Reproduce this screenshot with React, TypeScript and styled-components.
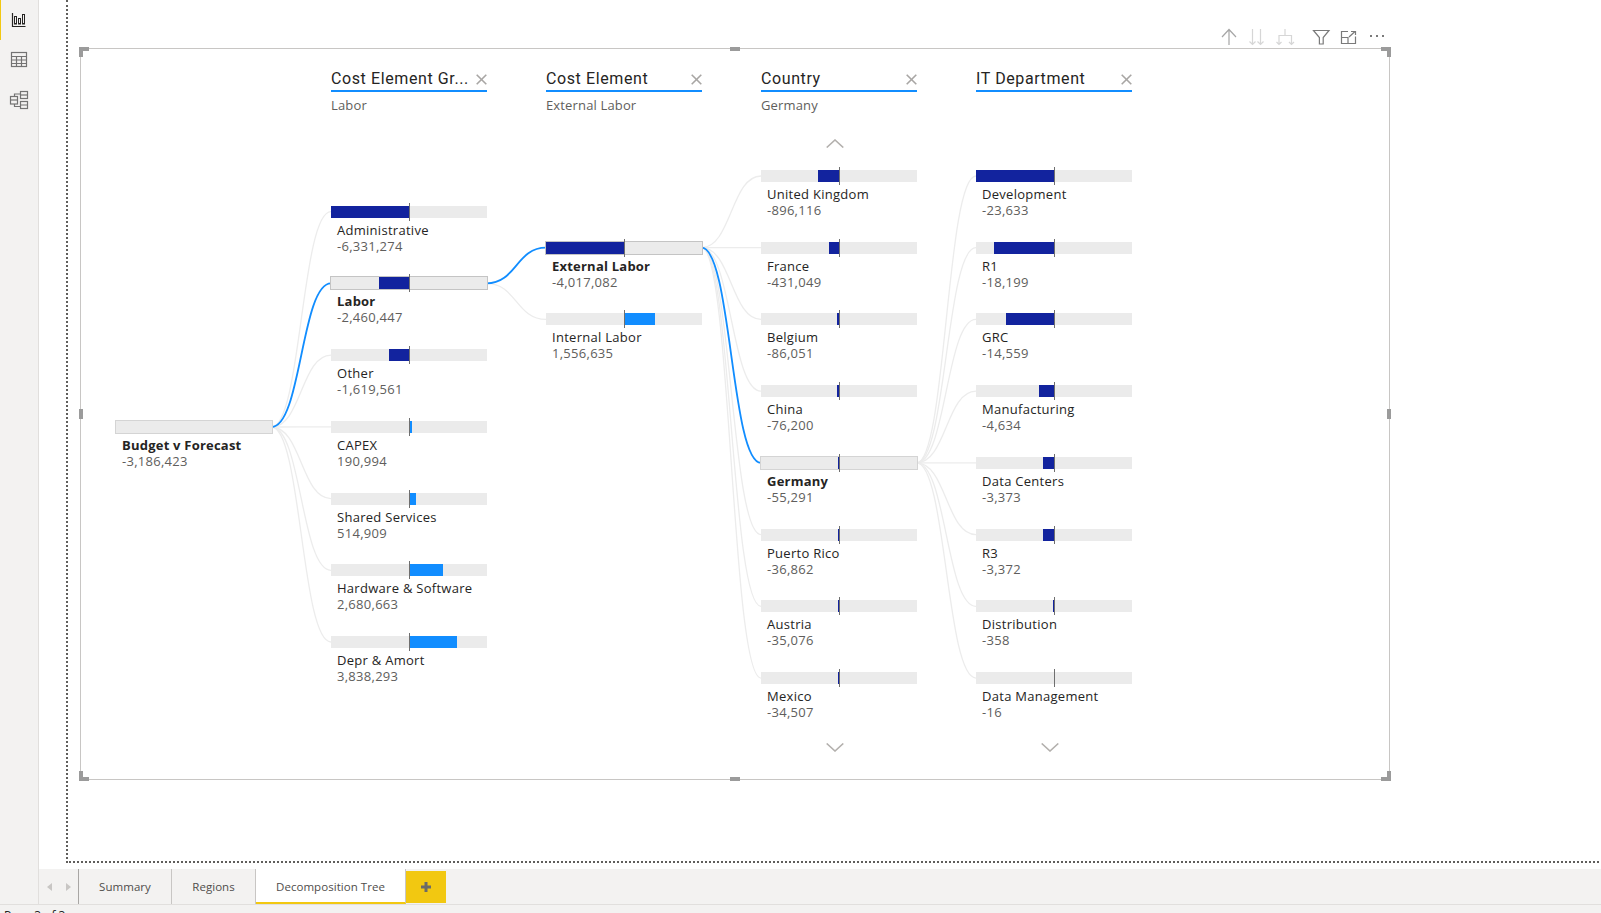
import React from "react";
import styled, { createGlobalStyle } from "styled-components";

const SANS = `"Open Sans", "Noto Sans", "Liberation Sans", sans-serif`;
const NAVY = "#12239e";
const BLUE = "#118dff";
const ROW = 71.72;
const BAR = 12;
const COL_W = 155.5;

const GlobalStyle = createGlobalStyle`
  html, body { margin: 0; padding: 0; background: #fff; overflow: hidden; }
  * { box-sizing: border-box; }
`;

const Page = styled.div`
  width: 1601px; height: 913px; display: flex; flex-direction: column;
  overflow: hidden; font-family: ${SANS}; background: #f3f2f1;
`;
const Top = styled.div`display: flex; height: 904px;`;
const Rail = styled.nav`
  width: 39px; flex: none; background: #f3f2f1; border-right: 1px solid #e1dfdd;
  display: flex; flex-direction: column;
`;
const RailItem = styled.div<{ $active?: boolean }>`
  height: 40px; display: flex; align-items: center; justify-content: center;
  padding-right: 1px;
  border-left: 1px solid ${(p) => (p.$active ? "#f2c811" : "transparent")};
  svg { display: block; margin-left: -1px; }
`;
const Main = styled.div`flex: 1; min-width: 0; display: flex; flex-direction: column;`;
const Canvas = styled.div`height: 869px; background: #fff; padding-left: 27px; overflow: hidden;`;
const ReportPage = styled.div`
  height: 863px; width: 1540px; padding: 48px 0 0 12px;
  border-left: 2px dotted #605e5c; border-bottom: 2px dotted #605e5c;
`;
const Visual = styled.section`
  position: relative; width: 1310px; height: 732px; border: 1px solid #c8c6c4;
`;
const Handle = styled.i<{ $x: "l" | "c" | "r"; $y: "t" | "m" | "b" }>`
  position: absolute; background: #9b9b9b;
  ${(p) => (p.$x === "l" ? "left: -2px;" : p.$x === "r" ? "right: -2px;" : "left: 649px;")}
  ${(p) => (p.$y === "t" ? "top: -2px;" : p.$y === "b" ? "bottom: -2px;" : "top: 360px;")}
  width: ${(p) => (p.$x === "c" ? "10px" : p.$y === "m" ? "4px" : "10px")};
  height: ${(p) => (p.$x === "c" ? "4px" : p.$y === "m" ? "10px" : "10px")};
  ${(p) => p.$x !== "c" && p.$y !== "m" && `
    clip-path: polygon(${
      p.$x === "l" && p.$y === "t" ? "0 0,100% 0,100% 40%,40% 40%,40% 100%,0 100%"
      : p.$x === "r" && p.$y === "t" ? "0 0,100% 0,100% 100%,60% 100%,60% 40%,0 40%"
      : p.$x === "l" ? "0 0,40% 0,40% 60%,100% 60%,100% 100%,0 100%"
      : "60% 0,100% 0,100% 100%,0 100%,0 60%,60% 60%"
    });
  `}
`;
const VisualToolbar = styled.div`
  position: absolute; top: -27px; right: -2px; height: 30px; display: flex;
`;
const ToolIcon = styled.svg<{ $gap?: boolean }>`
  display: block; width: 28px; height: 30px; margin-left: ${(p) => (p.$gap ? "8px" : "0")};
`;
const Links = styled.svg`position: absolute; left: 0; top: 0; width: 100%; height: 100%; pointer-events: none;`;
const Tree = styled.div`
  position: relative; display: flex; gap: 59.5px; padding-left: 35px; height: 100%;
`;
const Column = styled.div`width: ${COL_W}px; flex: none; display: flex; flex-direction: column;`;
const Head = styled.header`height: 72px; padding-top: 20px;`;
const TitleRow = styled.div`
  height: 23px; display: flex; align-items: center; justify-content: space-between;
  border-bottom: 2px solid ${BLUE}; padding-bottom: 2px;
`;
const Title = styled.h2`
  margin: 0; font: 400 16px/21px Roboto, "Liberation Sans", sans-serif; letter-spacing: 0.6px;
  color: #252423; white-space: nowrap;
`;
const CloseIcon = styled.svg`display: block; width: 11px; height: 11px; flex: none; margin-top: 2px;`;
const Selection = styled.div`
  margin-top: 4px; font-size: 13px; line-height: 18px; letter-spacing: 0.15px; color: #605e5c; white-space: nowrap;
`;
const Slot = styled.div<{ $h: number }>`
  height: ${(p) => p.$h}px; flex: none; display: flex; align-items: flex-start;
  justify-content: center; padding-right: 8px;
`;
const Chevron = styled.svg<{ $top: number }>`
  display: block; width: 18px; height: 9px; margin-top: ${(p) => p.$top}px;
`;
const Node = styled.div`height: ${ROW}px; flex: none;`;
const Bar = styled.div<{ $sel?: "strong" | "soft" }>`
  position: relative; height: ${BAR}px; background: #ebebeb;
  ${(p) => p.$sel === "strong" && "box-shadow: 0 0 0 1px #c4c4c4;"}
  ${(p) => p.$sel === "soft" && "box-shadow: 0 0 0 1px #d4d4d4;"}
`;
const Fill = styled.div<{ $positive: boolean }>`
  position: absolute; top: 0; bottom: 0; background: ${(p) => (p.$positive ? BLUE : NAVY)};
`;
const Zero = styled.div`
  position: absolute; left: 78px; top: -3px; bottom: -3px; width: 1px; background: #6f6f6f;
`;
const Name = styled.div<{ $bold?: boolean }>`
  margin-top: 4px; padding-left: 6px; font-size: 13px; line-height: 16px;
  letter-spacing: ${(p) => (p.$bold ? "0.22px" : "0.28px")};
  font-weight: ${(p) => (p.$bold ? 700 : 400)}; color: #252423; white-space: nowrap;
`;
const Amount = styled.div`
  padding-left: 6px; font-size: 13px; line-height: 16.5px; letter-spacing: 0.28px; color: #605e5c; white-space: nowrap;
`;
const TabBar = styled.div`height: 35px; display: flex; background: #f3f2f1;`;
const TabNav = styled.div`
  width: 40px; border-right: 1px solid #a8a6a4; display: flex; align-items: center;
  justify-content: center; gap: 14px; padding-left: 1px;
`;
const Arrow = styled.i<{ $dir: "l" | "r" }>`
  width: 0; height: 0; border-top: 4px solid transparent; border-bottom: 4px solid transparent;
  ${(p) => (p.$dir === "l" ? "border-right: 5px solid #c8c6c4;" : "border-left: 5px solid #c8c6c4;")}
`;
const Tab = styled.div<{ $active?: boolean; $w: number }>`
  width: ${(p) => p.$w}px; display: flex; align-items: center; justify-content: center;
  font-size: 11.5px; letter-spacing: 0.05px; color: #4f4d4b; padding-bottom: 1px;
  border-right: 1px solid #c8c6c4;
  ${(p) => p.$active && `background: #fff; border-bottom: 2px solid #f2c811; padding: 1px 0 0;`}
`;
const AddTab = styled.div`
  width: 40px; height: 32px; margin-top: 2px; background: #f2c811; display: flex;
  align-items: center; justify-content: center;
`;
const Plus = styled.svg`display: block; width: 12px; height: 12px;`;
const Status = styled.footer`
  height: 9px; border-top: 1px solid #e1dfdd; padding: 3px 0 0 4px; overflow: hidden;
  font-size: 12px; line-height: 16px; color: #252423;
`;

type Item = { name: string; value: string; amt: number; sel?: "strong" | "soft" };

const root: Item[] = [{ name: "Budget v Forecast", value: "-3,186,423", amt: 0, sel: "soft" }];
const group: Item[] = [
  { name: "Administrative", value: "-6,331,274", amt: -78 },
  { name: "Labor", value: "-2,460,447", amt: -30, sel: "strong" },
  { name: "Other", value: "-1,619,561", amt: -20 },
  { name: "CAPEX", value: "190,994", amt: 2 },
  { name: "Shared Services", value: "514,909", amt: 6 },
  { name: "Hardware & Software", value: "2,680,663", amt: 33 },
  { name: "Depr & Amort", value: "3,838,293", amt: 47 },
];
const element: Item[] = [
  { name: "External Labor", value: "-4,017,082", amt: -78, sel: "strong" },
  { name: "Internal Labor", value: "1,556,635", amt: 30 },
];
const country: Item[] = [
  { name: "United Kingdom", value: "-896,116", amt: -21.5 },
  { name: "France", value: "-431,049", amt: -10.5 },
  { name: "Belgium", value: "-86,051", amt: -2.5 },
  { name: "China", value: "-76,200", amt: -2 },
  { name: "Germany", value: "-55,291", amt: -1.5, sel: "soft" },
  { name: "Puerto Rico", value: "-36,862", amt: -1.2 },
  { name: "Austria", value: "-35,076", amt: -1.2 },
  { name: "Mexico", value: "-34,507", amt: -1.2 },
];
const dept: Item[] = [
  { name: "Development", value: "-23,633", amt: -78 },
  { name: "R1", value: "-18,199", amt: -60 },
  { name: "GRC", value: "-14,559", amt: -48 },
  { name: "Manufacturing", value: "-4,634", amt: -15 },
  { name: "Data Centers", value: "-3,373", amt: -11.5 },
  { name: "R3", value: "-3,372", amt: -11.5 },
  { name: "Distribution", value: "-358", amt: -1.2 },
  { name: "Data Management", value: "-16", amt: 0 },
];

// Tops of the first bar in each column, measured from the head's lower edge.
const LIST_TOP = [300, 84.7, 120.7, 49, 49];
const HEAD = 72;
const colLeft = (c: number) => 35 + c * (COL_W + 59.5);
const rowY = (c: number, r: number) => HEAD + LIST_TOP[c] + r * ROW + BAR / 2;

function link(c: number, from: number, to: number) {
  const x1 = colLeft(c) + COL_W;
  const x2 = colLeft(c + 1);
  const mid = (x1 + x2) / 2;
  const y1 = rowY(c, from);
  const y2 = rowY(c + 1, to);
  return `M${x1} ${y1} C${mid} ${y1} ${mid} ${y2} ${x2} ${y2}`;
}

const edges: { c: number; from: number; count: number; active: number }[] = [
  { c: 0, from: 0, count: group.length, active: 1 },
  { c: 1, from: 1, count: element.length, active: 0 },
  { c: 2, from: 0, count: country.length, active: 4 },
  { c: 3, from: 4, count: dept.length, active: -1 },
];

function TreeNode({ item }: { item: Item }) {
  const w = Math.abs(item.amt);
  const pos = item.amt > 0;
  return (
    <Node>
      <Bar $sel={item.sel}>
        {w > 0 && <Fill $positive={pos} style={pos ? { left: 79, width: w } : { left: 78 - w, width: w }} />}
        {item.name !== "Budget v Forecast" && <Zero />}
      </Bar>
      <Name $bold={!!item.sel}>{item.name}</Name>
      <Amount>{item.value}</Amount>
    </Node>
  );
}

function Header({ title, selection }: { title: string; selection?: string }) {
  return (
    <Head>
      <TitleRow>
        <Title>{title}</Title>
        <CloseIcon viewBox="0 0 11 11">
          <path d="M0.7 0.7L10.3 10.3M10.3 0.7L0.7 10.3" stroke="#a8a6a4" strokeWidth="1.6" fill="none" />
        </CloseIcon>
      </TitleRow>
      {selection && <Selection>{selection}</Selection>}
    </Head>
  );
}

const ChevronUp = () => (
  <Chevron $top={18} viewBox="0 0 18 9">
    <path d="M0.7 8.5L9 1L17.3 8.5" stroke="#b3b0ad" strokeWidth="1.6" fill="none" />
  </Chevron>
);
const ChevronDown = () => (
  <Chevron $top={-1} viewBox="0 0 18 9">
    <path d="M0.7 0.5L9 8L17.3 0.5" stroke="#b3b0ad" strokeWidth="1.6" fill="none" />
  </Chevron>
);

export default function App() {
  return (
    <Page>
      <GlobalStyle />
      <Top>
        <Rail>
          <RailItem $active>
            <svg width="24" height="24" viewBox="0 0 24 24" fill="none" stroke="#252423">
              <path d="M5.5 5V18.5H18.5" strokeWidth="1.2" />
              <rect x="7.5" y="8.5" width="2" height="7.5" />
              <rect x="11.5" y="10.5" width="2" height="5.5" />
              <rect x="15.5" y="6.5" width="2" height="9.5" />
            </svg>
          </RailItem>
          <RailItem>
            <svg width="24" height="24" viewBox="0 0 24 24" fill="none" stroke="#737373" strokeWidth="1.2">
              <rect x="4.5" y="4.5" width="15" height="14" />
              <path d="M4.5 8.5H19.5M4.5 12H19.5M4.5 15.5H19.5M9.5 8.5V18.5M14.5 8.5V18.5" />
            </svg>
          </RailItem>
          <RailItem>
            <svg width="24" height="24" viewBox="0 0 24 24" fill="none" stroke="#737373" strokeWidth="1.2">
              <rect x="3.5" y="8.5" width="7" height="7.5" />
              <path d="M3.5 12H10.5" />
              <rect x="13.5" y="3.5" width="7" height="7" />
              <path d="M13.5 7H20.5" />
              <rect x="13.5" y="13.5" width="7" height="7" />
              <path d="M13.5 17H20.5M7.5 8.5V6H13.5M7.5 16V18.5H13.5" />
            </svg>
          </RailItem>
        </Rail>
        <Main>
          <Canvas>
            <ReportPage>
              <Visual>
                <Handle $x="l" $y="t" /><Handle $x="c" $y="t" /><Handle $x="r" $y="t" />
                <Handle $x="l" $y="m" /><Handle $x="r" $y="m" />
                <Handle $x="l" $y="b" /><Handle $x="c" $y="b" /><Handle $x="r" $y="b" />
                <VisualToolbar>
                  <ToolIcon viewBox="0 0 28 30" fill="none" stroke="#a6a6a6" strokeWidth="1.2">
                    <path d="M14 7.5V23M7 15L14 7.5L21 15" />
                  </ToolIcon>
                  <ToolIcon viewBox="0 0 28 30" fill="none" stroke="#d6d6d6" strokeWidth="1.2">
                    <path d="M9.5 7V22.5M6.5 19.5L9.5 22.5L12.5 19.5M17.5 7V22.5M14.5 19.5L17.5 22.5L20.5 19.5" />
                  </ToolIcon>
                  <ToolIcon viewBox="0 0 28 30" fill="none" stroke="#d6d6d6" strokeWidth="1.2">
                    <path d="M14 7V13.5M8 22.5V13.5H20.5V22.5M5.5 20L8 22.5L10.5 20M18 20L20.5 22.5L23 20" />
                  </ToolIcon>
                  <ToolIcon $gap viewBox="0 0 28 30" fill="none" stroke="#7a7a7a" strokeWidth="1.2">
                    <path d="M6.5 8.5H22L16.2 15.5V22H12.4V15.5Z" />
                  </ToolIcon>
                  <ToolIcon viewBox="0 0 28 30" fill="none" stroke="#7a7a7a" strokeWidth="1.2">
                    <path d="M13 9.5H6.5V21.5H20.5V14.5M6.5 15.5H13V21.5M14 15L20 9.5M16 9.5H20.5V13" />
                  </ToolIcon>
                  <ToolIcon viewBox="0 0 28 30" fill="#7a7a7a" stroke="none">
                    <rect x="7" y="13" width="2" height="2" />
                    <rect x="13" y="13" width="2" height="2" />
                    <rect x="19" y="13" width="2" height="2" />
                  </ToolIcon>
                </VisualToolbar>
                <Links>
                  {edges.map((e) =>
                    Array.from({ length: e.count }, (_, i) =>
                      i === e.active ? null : (
                        <path key={`${e.c}-${i}`} d={link(e.c, e.from, i)} stroke="#ececec" strokeWidth="1.3" fill="none" />
                      )
                    )
                  )}
                  {edges.map((e) =>
                    e.active >= 0 ? (
                      <path key={`a${e.c}`} d={link(e.c, e.from, e.active)} stroke={BLUE} strokeWidth="1.8" fill="none" />
                    ) : null
                  )}
                </Links>
                <Tree>
                  <Column>
                    <Head />
                    <Slot $h={LIST_TOP[0]} />
                    {root.map((it) => <TreeNode key={it.name} item={it} />)}
                  </Column>
                  <Column>
                    <Header title="Cost Element Gr..." selection="Labor" />
                    <Slot $h={LIST_TOP[1]} />
                    {group.map((it) => <TreeNode key={it.name} item={it} />)}
                  </Column>
                  <Column>
                    <Header title="Cost Element" selection="External Labor" />
                    <Slot $h={LIST_TOP[2]} />
                    {element.map((it) => <TreeNode key={it.name} item={it} />)}
                  </Column>
                  <Column>
                    <Header title="Country" selection="Germany" />
                    <Slot $h={LIST_TOP[3]}><ChevronUp /></Slot>
                    {country.map((it) => <TreeNode key={it.name} item={it} />)}
                    <Slot $h={20}><ChevronDown /></Slot>
                  </Column>
                  <Column>
                    <Header title="IT Department" />
                    <Slot $h={LIST_TOP[4]} />
                    {dept.map((it) => <TreeNode key={it.name} item={it} />)}
                    <Slot $h={20}><ChevronDown /></Slot>
                  </Column>
                </Tree>
              </Visual>
            </ReportPage>
          </Canvas>
          <TabBar>
            <TabNav><Arrow $dir="l" /><Arrow $dir="r" /></TabNav>
            <Tab $w={93}>Summary</Tab>
            <Tab $w={84}>Regions</Tab>
            <Tab $active $w={150}>Decomposition Tree</Tab>
            <AddTab>
              <Plus viewBox="0 0 12 12"><path d="M6 1V11M1 6H11" stroke="#6b6a68" strokeWidth="3" /></Plus>
            </AddTab>
          </TabBar>
        </Main>
      </Top>
      <Status>Page 3 of 3</Status>
    </Page>
  );
}
